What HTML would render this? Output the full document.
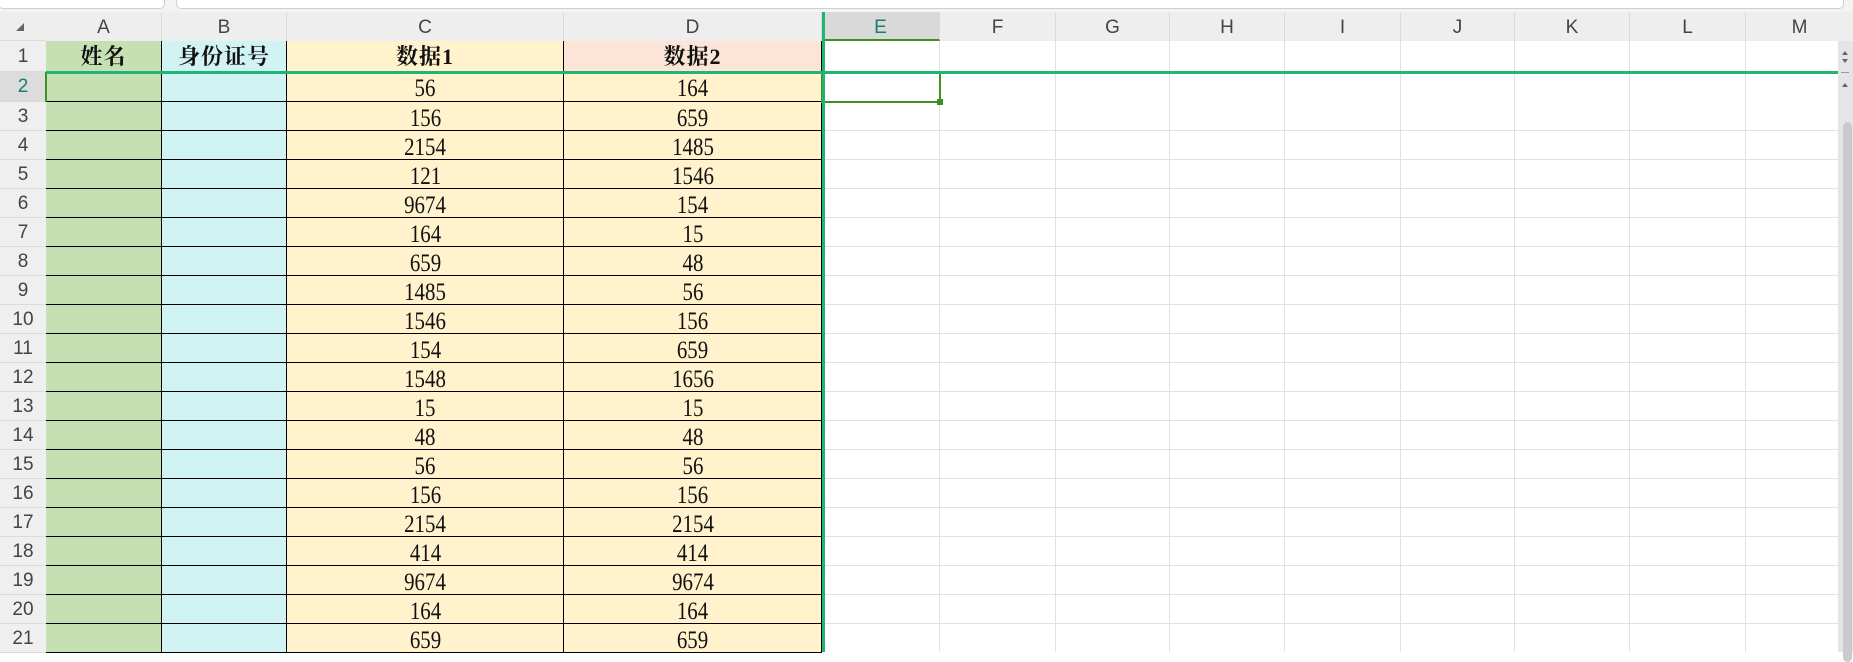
<!DOCTYPE html>
<html><head><meta charset="utf-8"><style>
*{margin:0;padding:0;box-sizing:border-box}
body{width:1853px;height:652px;overflow:hidden;background:#fff;position:relative;font-family:"Liberation Sans",sans-serif}
.a{position:absolute}
.ch{position:absolute;top:12px;height:29px;background:#eeeeee;border-right:1px solid #dadada;color:#444;font-size:19px;text-align:center;line-height:31px}
.rh{position:absolute;left:0;width:46px;background:#efefef;color:#444;font-size:19px;text-align:center;border-bottom:1px solid #dadada}
.row{position:absolute;left:46px;display:flex;height:29px}
.row div{height:100%;border-right:1px solid #000;border-bottom:1px solid #000;text-align:center;font-family:"Liberation Serif","Noto Serif CJK SC",serif;font-size:22px;line-height:31px;color:#111}
.row span{display:inline-block;transform:scale(0.95,1.15)}
.row b{font-weight:bold;letter-spacing:1px}
.c1{width:116px;background:#c6e0b4}.c2{width:125px;background:#d2f3f4}.c3{width:277px;background:#fff2cc}.c4{width:258px;background:#fff2cc}
.vl{position:absolute;top:41px;height:611px;width:1px;background:#e1e1e1}
</style></head><body>
<div class="a" style="left:0;top:0;width:1853px;height:12px;background:#f3f3f3"></div>
<div class="a" style="left:-2px;top:-4px;width:167px;height:13px;border:1px solid #cfcfcf;border-radius:5px;background:#fff"></div>
<div class="a" style="left:176px;top:-4px;width:1668px;height:13px;border:1px solid #cfcfcf;border-radius:5px;background:#fff"></div>
<div class="a" style="left:0;top:12px;width:1853px;height:29px;background:#eeeeee;border-bottom:1px solid #dcdcdc"></div>
<div class="a" style="left:16px;top:23px;width:0;height:0;border-left:8px solid transparent;border-bottom:8px solid #666"></div>
<div class="ch" style="left:46px;width:116px">A</div>
<div class="ch" style="left:162px;width:125px">B</div>
<div class="ch" style="left:287px;width:277px">C</div>
<div class="ch" style="left:564px;width:258px">D</div>
<div class="ch" style="left:822px;width:118px;background:#d9d9d9;color:#1a7d6f;border-bottom:2px solid #3f8f22">E</div>
<div class="ch" style="left:940px;width:116px">F</div>
<div class="ch" style="left:1056px;width:114px">G</div>
<div class="ch" style="left:1170px;width:115px">H</div>
<div class="ch" style="left:1285px;width:116px">I</div>
<div class="ch" style="left:1401px;width:114px">J</div>
<div class="ch" style="left:1515px;width:115px">K</div>
<div class="ch" style="left:1630px;width:116px">L</div>
<div class="ch" style="left:1746px;width:107px;border-right:none">M</div>
<div class="a" style="left:822px;top:102px;width:1016px;height:550px;background:repeating-linear-gradient(to bottom,transparent 0,transparent 28px,#e1e1e1 28px,#e1e1e1 29px)"></div>
<div class="a" style="left:822px;top:71px;width:1016px;height:1px;background:#e1e1e1"></div>
<div class="vl" style="left:939px"></div><div class="vl" style="left:1055px"></div><div class="vl" style="left:1169px"></div><div class="vl" style="left:1284px"></div><div class="vl" style="left:1400px"></div><div class="vl" style="left:1514px"></div><div class="vl" style="left:1629px"></div><div class="vl" style="left:1745px"></div>
<div class="rh" style="top:41px;height:31px;line-height:31px">1</div>
<div class="rh" style="top:72px;height:30px;line-height:30px;background:#dcdcdc;color:#1a7d6f">2</div>
<div class="rh" style="top:102px;height:29px;line-height:29px">3</div>
<div class="rh" style="top:131px;height:29px;line-height:29px">4</div>
<div class="rh" style="top:160px;height:29px;line-height:29px">5</div>
<div class="rh" style="top:189px;height:29px;line-height:29px">6</div>
<div class="rh" style="top:218px;height:29px;line-height:29px">7</div>
<div class="rh" style="top:247px;height:29px;line-height:29px">8</div>
<div class="rh" style="top:276px;height:29px;line-height:29px">9</div>
<div class="rh" style="top:305px;height:29px;line-height:29px">10</div>
<div class="rh" style="top:334px;height:29px;line-height:29px">11</div>
<div class="rh" style="top:363px;height:29px;line-height:29px">12</div>
<div class="rh" style="top:392px;height:29px;line-height:29px">13</div>
<div class="rh" style="top:421px;height:29px;line-height:29px">14</div>
<div class="rh" style="top:450px;height:29px;line-height:29px">15</div>
<div class="rh" style="top:479px;height:29px;line-height:29px">16</div>
<div class="rh" style="top:508px;height:29px;line-height:29px">17</div>
<div class="rh" style="top:537px;height:29px;line-height:29px">18</div>
<div class="rh" style="top:566px;height:29px;line-height:29px">19</div>
<div class="rh" style="top:595px;height:29px;line-height:29px">20</div>
<div class="rh" style="top:624px;height:29px;line-height:29px">21</div>
<div class="row" style="top:41px;height:31px"><div class="c1"><b>姓名</b></div><div class="c2"><b>身份证号</b></div><div class="c3"><b>数据1</b></div><div class="c4" style="background:#fce4d6"><b>数据2</b></div></div>
<div class="row" style="top:72px;height:30px"><div class="c1"></div><div class="c2"></div><div class="c3"><span>56</span></div><div class="c4"><span>164</span></div></div>
<div class="row" style="top:102px"><div class="c1"></div><div class="c2"></div><div class="c3"><span>156</span></div><div class="c4"><span>659</span></div></div>
<div class="row" style="top:131px"><div class="c1"></div><div class="c2"></div><div class="c3"><span>2154</span></div><div class="c4"><span>1485</span></div></div>
<div class="row" style="top:160px"><div class="c1"></div><div class="c2"></div><div class="c3"><span>121</span></div><div class="c4"><span>1546</span></div></div>
<div class="row" style="top:189px"><div class="c1"></div><div class="c2"></div><div class="c3"><span>9674</span></div><div class="c4"><span>154</span></div></div>
<div class="row" style="top:218px"><div class="c1"></div><div class="c2"></div><div class="c3"><span>164</span></div><div class="c4"><span>15</span></div></div>
<div class="row" style="top:247px"><div class="c1"></div><div class="c2"></div><div class="c3"><span>659</span></div><div class="c4"><span>48</span></div></div>
<div class="row" style="top:276px"><div class="c1"></div><div class="c2"></div><div class="c3"><span>1485</span></div><div class="c4"><span>56</span></div></div>
<div class="row" style="top:305px"><div class="c1"></div><div class="c2"></div><div class="c3"><span>1546</span></div><div class="c4"><span>156</span></div></div>
<div class="row" style="top:334px"><div class="c1"></div><div class="c2"></div><div class="c3"><span>154</span></div><div class="c4"><span>659</span></div></div>
<div class="row" style="top:363px"><div class="c1"></div><div class="c2"></div><div class="c3"><span>1548</span></div><div class="c4"><span>1656</span></div></div>
<div class="row" style="top:392px"><div class="c1"></div><div class="c2"></div><div class="c3"><span>15</span></div><div class="c4"><span>15</span></div></div>
<div class="row" style="top:421px"><div class="c1"></div><div class="c2"></div><div class="c3"><span>48</span></div><div class="c4"><span>48</span></div></div>
<div class="row" style="top:450px"><div class="c1"></div><div class="c2"></div><div class="c3"><span>56</span></div><div class="c4"><span>56</span></div></div>
<div class="row" style="top:479px"><div class="c1"></div><div class="c2"></div><div class="c3"><span>156</span></div><div class="c4"><span>156</span></div></div>
<div class="row" style="top:508px"><div class="c1"></div><div class="c2"></div><div class="c3"><span>2154</span></div><div class="c4"><span>2154</span></div></div>
<div class="row" style="top:537px"><div class="c1"></div><div class="c2"></div><div class="c3"><span>414</span></div><div class="c4"><span>414</span></div></div>
<div class="row" style="top:566px"><div class="c1"></div><div class="c2"></div><div class="c3"><span>9674</span></div><div class="c4"><span>9674</span></div></div>
<div class="row" style="top:595px"><div class="c1"></div><div class="c2"></div><div class="c3"><span>164</span></div><div class="c4"><span>164</span></div></div>
<div class="row" style="top:624px"><div class="c1"></div><div class="c2"></div><div class="c3"><span>659</span></div><div class="c4"><span>659</span></div></div>
<div class="a" style="left:45px;top:72px;width:2px;height:30px;background:#3f8f22"></div>
<div class="a" style="left:821px;top:71px;width:120px;height:32px;border:2px solid #3f8f22"></div>
<div class="a" style="left:937px;top:99px;width:6px;height:6px;background:#3f8f22"></div>
<div class="a" style="left:46px;top:71px;width:1792px;height:3px;background:#21b573"></div>
<div class="a" style="left:822px;top:12px;width:3px;height:640px;background:#21b573"></div>
<div class="a" style="left:1838px;top:41px;width:15px;height:611px;background:#e3e5e9"></div>
<div class="a" style="left:1842px;top:51px;border-left:3.5px solid transparent;border-right:3.5px solid transparent;border-bottom:4px solid #666"></div>
<div class="a" style="left:1842px;top:59px;border-left:3.5px solid transparent;border-right:3.5px solid transparent;border-top:4px solid #666"></div>
<div class="a" style="left:1841px;top:72px;width:8px;height:1px;background:#999"></div>
<div class="a" style="left:1842px;top:83px;border-left:3.5px solid transparent;border-right:3.5px solid transparent;border-bottom:4px solid #666"></div>
<div class="a" style="left:1843px;top:122px;width:9px;height:540px;background:#c8cacd;border-radius:5px"></div>
</body></html>
